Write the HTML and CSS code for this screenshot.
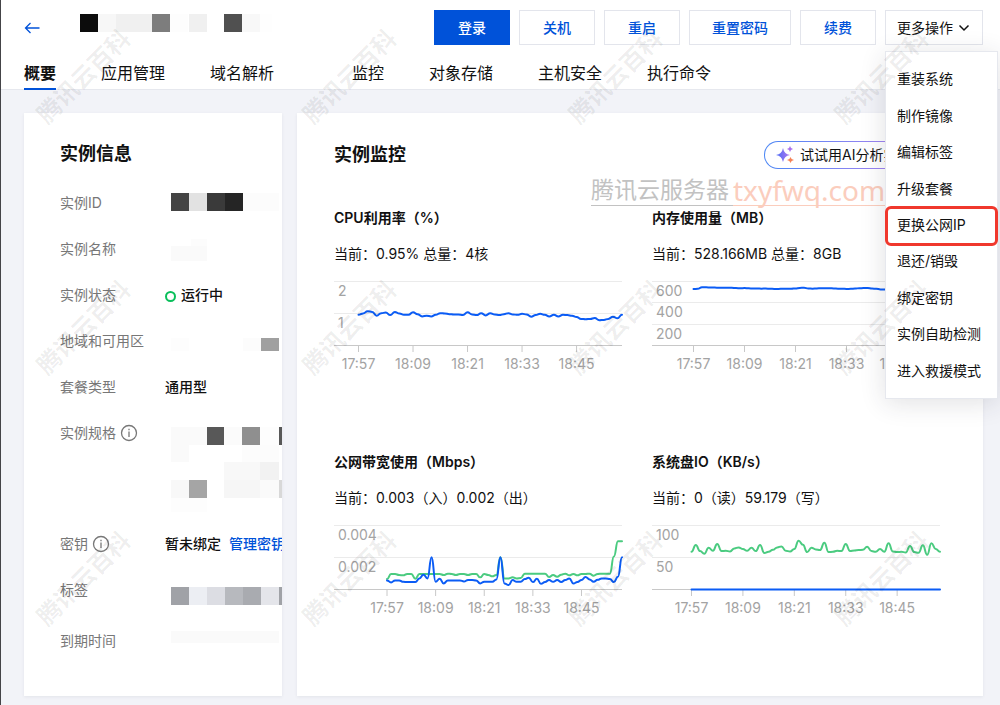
FILE: index.html
```html
<!DOCTYPE html>
<html lang="zh-CN">
<head>
    <meta charset="UTF-8">
    <meta name="viewport" content="width=device-width, initial-scale=1.0">
    <title>实例概要</title>
    <link rel="stylesheet" href="styles.css">
</head>
<body>
    <header class="header">
        <div class="toolbar">
            <a href="#" class="back" aria-label="返回">
                <svg width="16" height="12" viewBox="0 0 16 12" fill="none" stroke="#0052d9" stroke-width="1.3"><path d="M15.5 6H1.5M6.500 1L1.500 6l5 5"/></svg>
            </a>
            <svg class="instance-name" width="192" height="18" viewBox="0 0 192 18">
                <rect width="18" height="18" fill="#0c0c0c"/>
                <rect x="18" width="18" height="18" fill="#f7f7f7"/>
                <rect x="36" width="36" height="18" fill="#f0f0f0"/>
                <rect x="72" width="18" height="18" fill="#7d7d7d"/>
                <rect x="90" width="18" height="18" fill="#fdfdfd"/>
                <rect x="109" width="18" height="18" fill="#f0f0f0"/>
                <rect x="144" width="18" height="18" fill="#505050"/>
                <rect x="162" width="18" height="18" fill="#f8f8f8"/>
                <rect x="180" width="12" height="18" fill="#fefefe"/>
            </svg>
            <div class="actions">
                <button class="btn btn-primary">登录</button>
                <button class="btn">关机</button>
                <button class="btn">重启</button>
                <button class="btn">重置密码</button>
                <button class="btn">续费</button>
                <div class="more">
                    <button class="btn btn-more">更多操作
                        <svg width="12" height="8" viewBox="0 0 12 8" fill="none" stroke="#111" stroke-width="1.5"><path d="M1.5 1.5L6 6l4.5-4.5"/></svg>
                    </button>
                    <ul class="menu">
                        <li><a href="#">重装系统</a></li>
                        <li><a href="#">制作镜像</a></li>
                        <li><a href="#">编辑标签</a></li>
                        <li><a href="#">升级套餐</a></li>
                        <li class="marked"><a href="#">更换公网IP</a></li>
                        <li><a href="#">退还/销毁</a></li>
                        <li><a href="#">绑定密钥</a></li>
                        <li><a href="#">实例自助检测</a></li>
                        <li><a href="#">进入救援模式</a></li>
                    </ul>
                </div>
            </div>
        </div>
        <nav class="tabs">
            <a href="#" class="active">概要</a>
            <a href="#">应用管理</a>
            <a href="#">域名解析</a>
            <a href="#" class="spaced">监控</a>
            <a href="#">对象存储</a>
            <a href="#">主机安全</a>
            <a href="#">执行命令</a>
        </nav>
    </header>

    <main class="main">
        <section class="card info">
            <h2>实例信息</h2>
            <dl>
                <div class="row">
                    <dt>实例ID</dt>
                    <dd>
                        <svg class="mosaic" width="108" height="18">
                            <rect width="18" height="18" fill="#444"/>
                            <rect x="18" width="18" height="18" fill="#e2e2e2"/>
                            <rect x="36" width="18" height="18" fill="#3a3a3a"/>
                            <rect x="54" width="18" height="18" fill="#252525"/>
                            <rect x="72" width="36" height="18" fill="#fcfcfc"/>
                        </svg>
                    </dd>
                </div>
                <div class="row">
                    <dt>实例名称</dt>
                    <dd>
                        <svg class="mosaic" width="108" height="22">
                            <rect x="20" width="16" height="7" fill="#fcfcfc"/>
                            <rect y="7" width="36" height="15" fill="#fafafa"/>
                        </svg>
                    </dd>
                </div>
                <div class="row">
                    <dt>实例状态</dt>
                    <dd><span class="status"></span>运行中</dd>
                </div>
                <div class="row">
                    <dt>地域和可用区</dt>
                    <dd>
                        <svg class="mosaic low" width="108" height="13">
                            <rect width="18" height="13" fill="#fdfdfd"/>
                            <rect x="72" width="18" height="13" fill="#fcfcfc"/>
                            <rect x="90" width="18" height="13" fill="#a0a0a0"/>
                        </svg>
                    </dd>
                </div>
                <div class="row">
                    <dt>套餐类型</dt>
                    <dd>通用型</dd>
                </div>
                <div class="row row-spec">
                    <dt>实例规格
                        <svg class="tip" width="18" height="18" viewBox="0 0 18 18" fill="none" stroke="#777" stroke-width="1.3"><circle cx="9" cy="9" r="7.5"/><path d="M9 7.5V13M9 4.8v1.5"/></svg>
                    </dt>
                    <dd>
                        <svg class="mosaic" width="112" height="89" viewBox="0 -4 112 89">
                            <rect width="36" height="18" fill="#fafafa"/>
                            <rect x="36" width="17" height="18" fill="#585858"/>
                            <rect x="53" width="18" height="18" fill="#fbfbfb"/>
                            <rect x="71" width="18" height="18" fill="#8f8f8f"/>
                            <rect x="89" width="19" height="18" fill="#fdfdfd"/>
                            <rect x="108" width="4" height="18" fill="#585858"/>
                            <rect y="18" width="18" height="17" fill="#fafafa"/>
                            <rect x="71" y="18" width="37" height="17" fill="#fcfcfc"/>
                            <rect x="53" y="35" width="36" height="18" fill="#f8f8f8"/>
                            <rect x="89" y="35" width="19" height="18" fill="#f2f2f2"/>
                            <rect y="53" width="18" height="18" fill="#f8f8f8"/>
                            <rect x="18" y="53" width="18" height="18" fill="#a5a5a5"/>
                            <rect x="53" y="53" width="36" height="18" fill="#f6f6f6"/>
                            <rect x="89" y="53" width="19" height="18" fill="#fafafa"/>
                            <rect x="108" y="53" width="4" height="18" fill="#d8d8d8"/>
                            <rect y="71" width="36" height="14" fill="#fdfdfd"/>
                        </svg>
                    </dd>
                </div>
                <div class="row">
                    <dt>密钥
                        <svg class="tip" width="18" height="18" viewBox="0 0 18 18" fill="none" stroke="#777" stroke-width="1.3"><circle cx="9" cy="9" r="7.5"/><path d="M9 7.5V13M9 4.8v1.5"/></svg>
                    </dt>
                    <dd>暂未绑定<a href="#" class="key-link">管理密钥</a></dd>
                </div>
                <div class="row row-tag">
                    <dt>标签</dt>
                    <dd>
                        <svg class="mosaic low" width="112" height="18">
                            <rect width="18" height="18" fill="#a0a2a7"/>
                            <rect x="18" width="18" height="18" fill="#eceef3"/>
                            <rect x="36" width="18" height="18" fill="#dcdde3"/>
                            <rect x="54" width="18" height="18" fill="#b7b9be"/>
                            <rect x="72" width="18" height="18" fill="#a9abb0"/>
                            <rect x="90" width="18" height="18" fill="#e4e5ea"/>
                            <rect x="108" width="4" height="18" fill="#a0a2a7"/>
                        </svg>
                    </dd>
                </div>
                <div class="row">
                    <dt>到期时间</dt>
                    <dd>
                        <svg class="mosaic" width="108" height="12">
                            <rect width="108" height="12" fill="#fafafa"/>
                        </svg>
                    </dd>
                </div>
            </dl>
        </section>

        <section class="card monitor">
            <div class="monitor-head">
                <h2>实例监控</h2>
                <button class="ai-btn">
                    <svg width="20" height="20" viewBox="0 0 20 20">
                        <defs>
                            <linearGradient id="spark" x1="0" y1="0" x2="1" y2="0">
                                <stop offset="0" stop-color="#4b6bf5"/>
                                <stop offset="1" stop-color="#b07af0"/>
                            </linearGradient>
                        </defs>
                        <path fill="url(#spark)" d="M8 3Q9 9 15 10Q9 11 8 17Q7 11 1 10Q7 9 8 3Z"/>
                        <path fill="#a970ee" d="M15 1Q15.500 3.500 18 4Q15.500 4.500 15 7Q14.500 4.500 12 4Q14.500 3.500 15 1Z"/>
                        <path fill="#f58257" d="M15.500 12Q16 14.500 19 15Q16 15.500 15.500 18Q15 15.500 12 15Q15 14.500 15.500 12Z"/>
                    </svg>
                    试试用AI分析实例
                </button>
            </div>
            <div class="charts">
                <article>
                    <h3>CPU利用率（%）</h3>
                    <p>当前：0.95% 总量：4核</p>
                    <svg class="chart" id="cpu" viewBox="0 0 288 95"></svg>
                </article>
                <article>
                    <h3>内存使用量（MB）</h3>
                    <p>当前：528.166MB 总量：8GB</p>
                    <svg class="chart" id="memory" viewBox="0 0 288 95"></svg>
                </article>
                <article>
                    <h3>公网带宽使用（Mbps）</h3>
                    <p>当前：0.003（入）0.002（出）</p>
                    <svg class="chart" id="network" viewBox="0 0 288 95"></svg>
                </article>
                <article>
                    <h3>系统盘IO（KB/s）</h3>
                    <p>当前：0（读）59.179（写）</p>
                    <svg class="chart" id="disk" viewBox="0 0 288 95"></svg>
                </article>
            </div>
            <div class="site-mark"><span class="site-name">腾讯云服务器</span><span class="site-url">txyfwq.com</span></div>
        </section>
    </main>

    <div class="watermarks" aria-hidden="true">
        <span>腾讯云百科</span><span>腾讯云百科</span><span>腾讯云百科</span><span>腾讯云百科</span>
        <span>腾讯云百科</span><span>腾讯云百科</span><span>腾讯云百科</span><span>腾讯云百科</span>
        <span>腾讯云百科</span><span>腾讯云百科</span><span>腾讯云百科</span><span>腾讯云百科</span>
    </div>

    <script src="charts.js"></script>
</body>
</html>
```
FILE: styles.css
```css
* {
    box-sizing: border-box;
}

body {
    margin: 0;
    min-height: 100vh;
    position: relative;
    overflow: hidden;
    border-left: 1px solid #444448;
    background-color: #f2f3f8;
    color: #111;
    font-family: Inter, "Noto Sans CJK SC", sans-serif;
    font-size: 14px;
    line-height: 20px;
}

a {
    color: inherit;
    text-decoration: none;
}

h2, h3, p, ul, dl, dd {
    margin: 0;
    padding: 0;
}

h2 {
    font-size: 18px;
    line-height: 24px;
}

/* Шапка */
.header {
    height: 90px;
    padding: 10px 17px 0 23px;
    display: flex;
    flex-direction: column;
    justify-content: space-between;
    background-color: #fff;
    border-bottom: 1px solid #e6e8ee;
}

.toolbar {
    display: flex;
    align-items: center;
}

.back {
    display: flex;
    width: 56px;
}

.instance-name {
    margin-bottom: 9px;
}

.actions {
    margin-left: auto;
    display: flex;
    gap: 9px;
}

.btn {
    min-width: 76px;
    height: 35px;
    padding: 0 22px;
    border: 1px solid #e3e5ec;
    background-color: #fff;
    color: #0052d9;
    font: inherit;
    font-weight: 500;
    cursor: pointer;
}

.btn-primary {
    background-color: #0052d9;
    border-color: #0052d9;
    color: #fff;
}

.btn-more {
    display: flex;
    align-items: center;
    gap: 5px;
    width: 98px;
    padding: 0 11px;
    color: #111;
    font-weight: 400;
    white-space: nowrap;
}

.more {
    position: relative;
}

.menu {
    position: absolute;
    top: 41px;
    left: 0;
    z-index: 5;
    width: 113px;
    height: 348px;
    padding: 9px 0;
    display: flex;
    flex-direction: column;
    list-style: none;
    background-color: #fff;
    border: 1px solid #e6e8ee;
    box-shadow: 0 4px 24px rgba(40, 44, 60, 0.14);
}

.menu li {
    flex: 1;
    position: relative;
    display: flex;
    align-items: center;
    padding-left: 11px;
    white-space: nowrap;
}

.marked::after {
    content: "";
    position: absolute;
    inset: -1px -1px -3px;
    border: 3px solid #f0382d;
    border-radius: 6px;
}

.tabs {
    display: flex;
    gap: 45px;
    font-size: 16px;
    line-height: 24px;
    margin-bottom: -1px;
}

.tabs a {
    padding-bottom: 3px;
    border-bottom: 2px solid transparent;
}

.tabs .active {
    font-weight: 700;
    border-color: #0052d9;
}

.tabs .spaced {
    margin-left: 33px;
}

/* Карточки */
.main {
    display: flex;
    gap: 15px;
    padding: 23px 17px 9px 23px;
}

.card {
    background-color: #fff;
    box-shadow: 0 1px 3px rgba(54, 58, 80, 0.08);
}

.info {
    width: 258px;
    flex: none;
    padding: 29px 0 19px 36px;
    overflow: hidden;
}

.info dl {
    margin-top: 27px;
}

.row {
    display: flex;
    height: 46px;
    white-space: nowrap;
}

.row-spec {
    height: 111px;
}

.row-tag {
    height: 51px;
}

dt {
    width: 105px;
    flex: none;
    display: flex;
    height: 20px;
    align-items: center;
    gap: 4px;
    color: #777;
}

.tip {
    flex: none;
}

.mosaic {
    display: block;
    margin-left: 6px;
}

.low {
    margin-top: 7px;
}

.status {
    display: inline-block;
    width: 11px;
    height: 11px;
    margin-right: 5px;
    border: 2px solid #0abf5b;
    border-radius: 50%;
    vertical-align: -2px;
}

.key-link {
    margin-left: 8px;
    color: #0052d9;
}

dd {
    font-weight: 500;
}

/* Мониторинг */
.monitor {
    position: relative;
    flex: 1;
    padding: 28px 43px 35px 37px;
}

.monitor-head {
    display: flex;
    justify-content: space-between;
    align-items: center;
}

.ai-btn {
    width: 176px;
    height: 28px;
    padding: 0 10px;
    display: flex;
    align-items: center;
    gap: 5px;
    border: 1px solid transparent;
    border-radius: 14px;
    background: linear-gradient(#fff, #fff) padding-box, linear-gradient(90deg, #4a86f5, #c583ee) border-box;
    color: #111;
    font: inherit;
    white-space: nowrap;
}

.charts {
    display: grid;
    grid-template-columns: 1fr 1fr;
    gap: 76px 30px;
    margin-top: 39px;
}

.charts h3 {
    font-size: 14px;
    line-height: 20px;
    font-weight: 600;
}

.charts p {
    margin: 16px 0 17px;
    white-space: nowrap;
}

.chart {
    display: block;
    width: 100%;
    overflow: visible;
}

.chart text {
    font-size: 14px;
    fill: #a3a3a3;
}

.time {
    text-anchor: middle;
}

.grid-line {
    stroke: #ebebeb;
}

.axis {
    stroke: #c8c8c8;
}

.line {
    fill: none;
    stroke-width: 2;
    stroke-linejoin: round;
    stroke-linecap: round;
}

.site-mark {
    position: absolute;
    top: 62px;
    left: 294px;
    display: flex;
    align-items: stretch;
    line-height: 30px;
}

.site-name {
    padding-right: 4px;
    font-size: 23px;
    color: #c2c2c2;
    border-bottom: 1px solid #c2c2c2;
}

.site-url {
    font-family: "Noto Sans", sans-serif;
    font-size: 28px;
    color: #fbcdbd;
    border-bottom: 1px solid #fbcdbd;
}

.watermarks {
    position: absolute;
    top: -49px;
    left: -50px;
    z-index: 10;
    display: grid;
    grid-template-columns: repeat(4, 266px);
    grid-auto-rows: 251px;
    pointer-events: none;
    font-size: 24px;
    font-weight: 700;
    color: rgba(0, 0, 0, 0.07);
}

.watermarks span {
    place-self: center;
    transform: rotate(-45deg);
}
```
FILE: charts.js
```js
const BLUE = '#0b5cf5';
const GREEN = '#4bcb80';
const times = ['17:57', '18:09', '18:21', '18:33', '18:45'];

// one value per minute, 17:57 - 18:55
const cpu = [96, 100, 107, 105, 93, 101, 103, 95, 105, 100, 96, 96, 104, 98, 91, 93, 91, 96, 101, 100, 98, 97, 97, 95, 104, 97, 95, 101, 94, 101, 97, 95, 98, 101, 97, 96, 99, 97, 90, 95, 99, 96, 91, 96, 91, 96, 95, 93, 89, 83, 82, 83, 86, 79, 80, 83, 90, 85, 96];
const memory = [529, 531, 547, 545, 544, 543, 542, 541, 541, 542, 538, 537, 538, 536, 535, 534, 533, 534, 532, 530, 530, 532, 533, 532, 535, 540, 541, 535, 533, 535, 537, 536, 537, 535, 533, 532, 530, 531, 534, 537, 538, 538, 534, 532, 526, 524, 527, 530, 528, 529, 530, 528, 527, 529, 530, 528, 527, 528, 528];
const netIn = [31, 46, 46, 43, 42, 46, 46, 32, 46, 46, 46, 46, 46, 46, 43, 47, 46, 43, 46, 46, 43, 46, 46, 36, 46, 43, 39, 43, 96, 33, 33, 36, 33, 34, 47, 47, 47, 47, 47, 47, 37, 43, 38, 44, 47, 42, 46, 42, 46, 46, 47, 41, 46, 47, 47, 47, 98, 143, 143];
const netOut = [27, 21, 27, 27, 23, 22, 22, 22, 33, 44, 33, 96, 23, 32, 18, 27, 27, 27, 27, 24, 28, 28, 27, 18, 23, 23, 23, 30, 96, 18, 13, 28, 23, 23, 31, 35, 22, 32, 17, 22, 28, 23, 28, 22, 28, 33, 18, 22, 28, 37, 30, 23, 29, 33, 33, 31, 22, 38, 96];
const diskWrite = [112, 132, 114, 106, 124, 115, 135, 114, 115, 113, 122, 125, 120, 115, 124, 114, 132, 108, 112, 118, 125, 128, 115, 113, 120, 145, 133, 111, 124, 119, 117, 139, 111, 112, 115, 114, 135, 114, 116, 117, 118, 127, 114, 112, 120, 112, 137, 113, 111, 112, 110, 129, 111, 109, 131, 103, 137, 120, 112];
const diskRead = new Array(59).fill(0);

function smoothPath(points) {
    let d = `M${points[0][0]} ${points[0][1]}`;
    for (let i = 1; i < points.length; i++) {
        const [x0, y0] = points[i - 1];
        const [x1, y1] = points[i];
        const mid = (x0 + x1) / 2;
        d += `C${mid} ${y0} ${mid} ${y1} ${x1} ${y1}`;
    }
    return d;
}

function drawChart(id, labels, start, max, series) {
    const step = (288 - start) / 58;
    const rowHeight = 64 / labels.length;
    let html = '';

    labels.forEach((label, i) => {
        const y = Math.round(i * rowHeight);
        html += `<line class="grid-line" x1="0" x2="288" y1="${y + 0.5}" y2="${y + 0.5}"/>`;
        html += `<text x="4" y="${y + 15}">${label}</text>`;
    });

    html += '<line class="axis" x1="0" x2="288" y1="64.5" y2="64.5"/>';
    times.forEach((time, i) => {
        const x = start + i * 12 * step;
        html += `<line class="axis" x1="${x}" x2="${x}" y1="65" y2="71"/>`;
        html += `<text class="time" x="${x}" y="88">${time}</text>`;
    });

    series.forEach(({ data, color }) => {
        const points = data.map((v, i) => [start + i * step, 64.5 - v / max * 64]);
        html += `<path class="line" stroke="${color}" d="${smoothPath(points)}"/>`;
    });

    document.getElementById(id).innerHTML = html;
}

drawChart('cpu', ['2', '1'], 24.5, 200, [{ data: cpu, color: BLUE }]);
drawChart('memory', ['600', '400', '200'], 41.5, 600, [{ data: memory, color: BLUE }]);
drawChart('network', ['0.004', '0.002'], 53, 190, [{ data: netIn, color: GREEN }, { data: netOut, color: BLUE }]);
drawChart('disk', ['100', '50'], 39.5, 190, [{ data: diskWrite, color: GREEN }, { data: diskRead, color: BLUE }]);
```
